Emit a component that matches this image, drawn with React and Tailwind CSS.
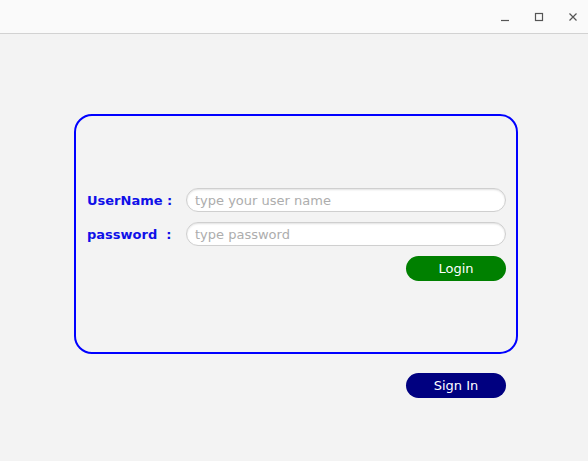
export default function App() {
  return (
    <div className="flex h-[461px] w-[588px] flex-col bg-[#f3f3f3] font-['DejaVu_Sans',sans-serif]">
      <div className="flex h-[34px] shrink-0 items-center justify-end gap-[24px] border-b border-[#d2d2d2] bg-[#fafafa] pr-[10px]">
        <svg width="10" height="10" viewBox="0 0 10 10">
          <path d="M1 8.5h8" stroke="#555" strokeWidth="1.2" />
        </svg>
        <svg width="10" height="10" viewBox="0 0 10 10">
          <rect x="1.5" y="1.5" width="7" height="7" fill="none" stroke="#555" strokeWidth="1.2" />
        </svg>
        <svg width="10" height="10" viewBox="0 0 10 10">
          <path d="M1.5 1.5l7 7M8.5 1.5l-7 7" stroke="#555" strokeWidth="1.2" />
        </svg>
      </div>

      <div className="ml-[74px] mt-[80px] flex h-[240px] w-[444px] flex-col rounded-[18px] border-2 border-[#0000ff] pl-[11px] pr-[10px] pt-[72px]">
        <div className="flex h-[24px] items-center">
          <span className="w-[99px] pt-[1px] text-[13px] font-bold text-[#1010e8]">UserName :</span>
          <input
            type="text"
            placeholder="type your user name"
            className="h-[24px] w-[320px] rounded-full border border-[#cfcfcf] bg-white px-[8px] text-[13px] shadow-[inset_0_1px_2px_rgba(0,0,0,0.12)] outline-none placeholder:text-[#adadad]"
          />
        </div>
        <div className="mt-[10px] flex h-[24px] items-center">
          <span className="w-[99px] whitespace-pre pt-[1px] text-[13px] font-bold text-[#1010e8]">{'password  :'}</span>
          <input
            type="password"
            placeholder="type password"
            className="h-[24px] w-[320px] rounded-full border border-[#cfcfcf] bg-white px-[8px] text-[13px] shadow-[inset_0_1px_2px_rgba(0,0,0,0.12)] outline-none placeholder:text-[#adadad]"
          />
        </div>
        <div className="mt-[10px] flex justify-end">
          <button className="h-[25px] w-[100px] rounded-full bg-[#008000] text-[13px] text-white">Login</button>
        </div>
      </div>

      <div className="ml-[406px] mt-[19px]">
        <button className="h-[25px] w-[100px] rounded-full bg-[#000080] text-[13px] text-white">Sign In</button>
      </div>
    </div>
  );
}
